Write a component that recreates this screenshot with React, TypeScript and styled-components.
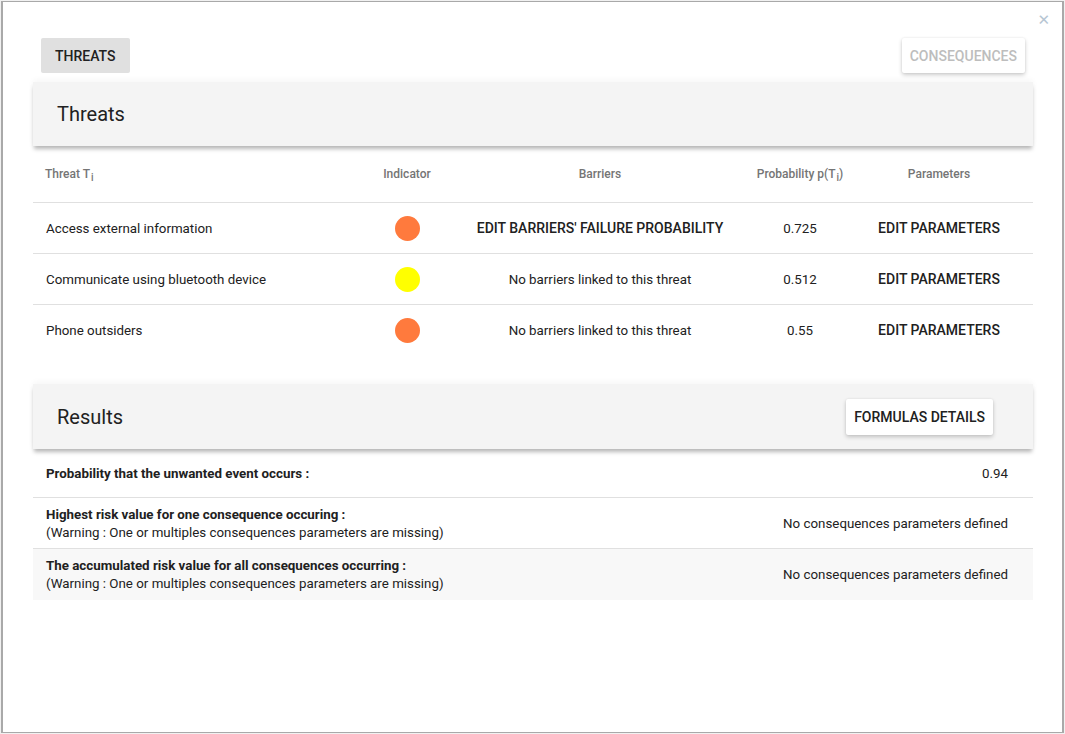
import React from "react";
import styled, { createGlobalStyle } from "styled-components";

const Global = createGlobalStyle`
  html, body { margin: 0; padding: 0; }
  body {
    background: #f1f1f1;
    font-family: Roboto, "Liberation Sans", Arial, sans-serif;
    color: #212121;
  }
  * { box-sizing: border-box; }
`;

const Page = styled.div`
  padding: 1px 1px 1px 1px;
  height: 734px;
`;

const Modal = styled.div`
  position: relative;
  height: 732px;
  background: #fff;
  border: 1px solid #a9a9a9;
  border-left-width: 2px;
  border-right-width: 2px;
  padding: 36px 29px 0 30px;
`;

const Close = styled.span`
  position: absolute;
  top: 9px;
  right: 12px;
  font-size: 15px;
  color: #b7c6d3;
  font-family: "DejaVu Sans", sans-serif;
  line-height: 18px;
`;

const Toolbar = styled.div`
  display: flex;
  justify-content: space-between;
  padding: 0 8px;
  margin-bottom: 9px;
`;

const Button = styled.button<{ $variant: "active" | "raised" | "disabled" }>`
  height: 35px;
  padding: 0 ${(p) => (p.$variant === "active" ? "14px" : "8px")};
  border: none;
  border-radius: 2px;
  font-family: Roboto, "Liberation Sans", sans-serif;
  font-size: 14px;
  font-weight: 500;
  letter-spacing: 0;
  text-transform: uppercase;
  cursor: pointer;
  background: ${(p) => (p.$variant === "active" ? "#e0e0e0" : "#fff")};
  color: ${(p) => (p.$variant === "disabled" ? "#bdbdbd" : "#212121")};
  box-shadow: ${(p) =>
    p.$variant === "active"
      ? "none"
      : "0 2px 4px rgba(0,0,0,0.2), 0 0 2px rgba(0,0,0,0.08)"};
`;

const FormulaButton = styled(Button)`
  height: 36px;
  padding: 0 8px;
`;

const PanelHeader = styled.div<{ $h: number }>`
  height: ${(p) => p.$h}px;
  background: #f4f4f4;
  display: flex;
  align-items: center;
  justify-content: space-between;
  padding: 0 40px 0 24px;
  box-shadow: 0 4px 4px -1px rgba(0, 0, 0, 0.28), 0 -2px 6px rgba(0, 0, 0, 0.04);
  position: relative;
  z-index: 1;
`;

const PanelTitle = styled.h2`
  margin: 0;
  font-size: 20px;
  font-weight: 400;
  color: #212121;
`;

const cols = "312px 124px 262px 138px 140px 1fr";

const HeadRow = styled.div`
  display: grid;
  grid-template-columns: ${cols};
  height: 57px;
  align-items: center;
  border-bottom: 1px solid #e0e0e0;
  font-size: 12px;
  font-weight: 500;
  color: #757575;
`;

const Row = styled.div<{ $last?: boolean }>`
  display: grid;
  grid-template-columns: ${cols};
  height: 51px;
  align-items: center;
  border-bottom: 1px solid ${(p) => (p.$last ? "transparent" : "#e0e0e0")};
  font-size: 13.33px;
  color: #212121;
`;

const Cell = styled.div<{ $align?: "left" | "center" }>`
  padding-left: ${(p) => (p.$align === "left" ? "13px" : "0")};
  display: flex;
  justify-content: ${(p) => (p.$align === "left" ? "flex-start" : "center")};
  align-items: center;
  white-space: nowrap;
`;

const HeadCell = styled(Cell)`
  padding-left: ${(p) => (p.$align === "left" ? "12px" : "0")};
`;

const Sub = styled.sub`
  font-size: 10px;
  vertical-align: -3px;
  line-height: 0;
  margin-left: 1px;
`;

const Dot = styled.span<{ $color: string }>`
  width: 25px;
  height: 25px;
  border-radius: 50%;
  background: ${(p) => p.$color};
  display: inline-block;
`;

const LinkText = styled.span`
  font-size: 14px;
  font-weight: 500;
  color: #212121;
  text-transform: uppercase;
`;

const Table = styled.div`
  margin-bottom: 28px;
`;

const ResultRow = styled.div<{ $h: number; $shade?: boolean; $last?: boolean }>`
  display: flex;
  justify-content: space-between;
  align-items: center;
  height: ${(p) => p.$h}px;
  padding: 1px 25px 0 13px;
  background: ${(p) => (p.$shade ? "#f8f8f8" : "#fff")};
  border-bottom: 1px solid ${(p) => (p.$last ? "transparent" : "#e0e0e0")};
  font-size: 13.33px;
  color: #212121;
  line-height: 18px;
`;

const Label = styled.div`
  display: flex;
  flex-direction: column;
`;

const Strong = styled.span`
  font-weight: 700;
  font-size: 13.33px;
`;

const Value = styled.span`
  font-size: 13.33px;
`;

const threats = [
  { name: "Access external information", color: "#ff7a3d", barrier: null, p: "0.725" },
  { name: "Communicate using bluetooth device", color: "#ffff00", barrier: "No barriers linked to this threat", p: "0.512" },
  { name: "Phone outsiders", color: "#ff7a3d", barrier: "No barriers linked to this threat", p: "0.55" },
];

export default function App() {
  return (
    <>
      <Global />
      <Page>
        <Modal>
          <Close>✕</Close>
          <Toolbar>
            <Button $variant="active">Threats</Button>
            <Button $variant="disabled">Consequences</Button>
          </Toolbar>

          <PanelHeader $h={64}>
            <PanelTitle>Threats</PanelTitle>
          </PanelHeader>
          <Table>
            <HeadRow>
              <HeadCell $align="left">
                <span>
                  Threat T<Sub>i</Sub>
                </span>
              </HeadCell>
              <HeadCell>Indicator</HeadCell>
              <HeadCell>Barriers</HeadCell>
              <HeadCell>
                <span>
                  Probability p(T<Sub>i</Sub>)
                </span>
              </HeadCell>
              <HeadCell>Parameters</HeadCell>
              <HeadCell />
            </HeadRow>
            {threats.map((t, i) => (
              <Row key={t.name} $last={i === threats.length - 1}>
                <Cell $align="left">{t.name}</Cell>
                <Cell>
                  <Dot $color={t.color} />
                </Cell>
                <Cell>
                  {t.barrier ?? <LinkText>Edit barriers' failure probability</LinkText>}
                </Cell>
                <Cell>{t.p}</Cell>
                <Cell>
                  <LinkText>Edit parameters</LinkText>
                </Cell>
                <Cell />
              </Row>
            ))}
          </Table>

          <PanelHeader $h={65}>
            <PanelTitle>Results</PanelTitle>
            <FormulaButton $variant="raised">Formulas details</FormulaButton>
          </PanelHeader>
          <ResultRow $h={49}>
            <Label>
              <Strong>Probability that the unwanted event occurs :</Strong>
            </Label>
            <Value>0.94</Value>
          </ResultRow>
          <ResultRow $h={51}>
            <Label>
              <Strong>Highest risk value for one consequence occuring :</Strong>
              <span>(Warning : One or multiples consequences parameters are missing)</span>
            </Label>
            <Value>No consequences parameters defined</Value>
          </ResultRow>
          <ResultRow $h={51} $shade $last>
            <Label>
              <Strong>The accumulated risk value for all consequences occurring :</Strong>
              <span>(Warning : One or multiples consequences parameters are missing)</span>
            </Label>
            <Value>No consequences parameters defined</Value>
          </ResultRow>
        </Modal>
      </Page>
    </>
  );
}
